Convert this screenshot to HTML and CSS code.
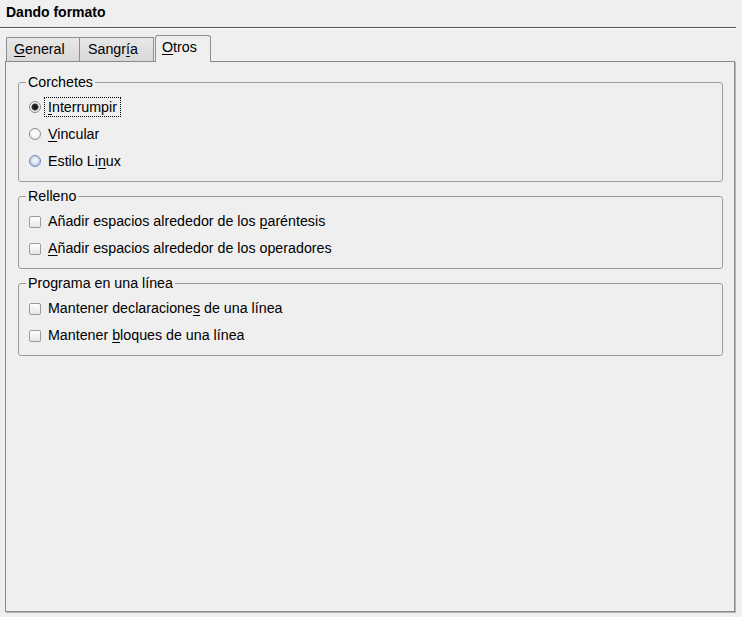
FILE: index.html
```html
<!DOCTYPE html>
<html lang="es">
<head>
<meta charset="utf-8">
<title>Dando formato</title>
<link rel="stylesheet" href="styles.css">
</head>
<body>
<div class="title">Dando formato</div>
<div class="separator"></div>
<div class="tabbar">
  <div class="tab tab-general"><u>G</u>eneral</div>
  <div class="tab tab-sangria">Sangr<u>í</u>a</div>
  <div class="tab tab-active"><u>O</u>tros</div>
</div>
<div class="pane">
  <fieldset class="group">
    <legend>Corchetes</legend>
    <div class="row"><span class="radio radio-checked"></span><span class="label focus"><u>I</u>nterrumpir</span></div>
    <div class="row"><span class="radio"></span><span class="label"><u>V</u>incular</span></div>
    <div class="row"><span class="radio radio-hover"></span><span class="label">Estilo Li<u>n</u>ux</span></div>
  </fieldset>
  <fieldset class="group">
    <legend>Relleno</legend>
    <div class="row"><span class="check"></span><span class="label">Añadir espacios alrededor de los <u>p</u>aréntesis</span></div>
    <div class="row"><span class="check"></span><span class="label"><u>A</u>ñadir espacios alrededor de los operadores</span></div>
  </fieldset>
  <fieldset class="group">
    <legend>Programa en una línea</legend>
    <div class="row"><span class="check"></span><span class="label">Mantener declaracione<u>s</u> de una línea</span></div>
    <div class="row"><span class="check"></span><span class="label">Mantener <u>b</u>loques de una línea</span></div>
  </fieldset>
</div>
</body>
</html>
```
FILE: styles.css
```css
* { box-sizing: border-box; }
html, body { margin: 0; padding: 0; }
body {
  background: #efefef;
  font-family: "Liberation Sans", Arial, sans-serif;
  font-size: 14.25px;
  color: #000;
  width: 742px;
  height: 617px;
  overflow: hidden;
}
u { text-decoration: underline; text-underline-offset: 2px; }

.title {
  height: 27px;
  padding: 4px 0 0 6px;
  line-height: 16px;
  font-weight: bold;
  font-size: 14px;
}
.separator {
  width: 736px;
  border-top: 1px solid #555;
  border-bottom: 1px solid #fff;
}

.tabbar {
  display: flex;
  align-items: flex-end;
  height: 26px;
  margin-top: 6px;
  padding-left: 6px;
}
.tab {
  height: 24px;
  line-height: 22px;
  border: 1px solid #8e8e8e;
  border-bottom: none;
  background: linear-gradient(#e8e8e8, #d8d8d8);
  white-space: nowrap;
}
.tab-general {
  width: 73px;
  padding-left: 7px;
  border-right: none;
  border-radius: 2px 0 0 0;
}
.tab-sangria {
  width: 75px;
  padding-left: 8px;
}
.tab-active {
  position: relative;
  z-index: 1;
  width: 56px;
  height: 27px;
  margin-left: 1px;
  margin-bottom: -1px;
  padding-left: 6px;
  line-height: 22px;
  background: #efefef;
  border-radius: 3px 3px 0 0;
}

.pane {
  width: 730px;
  height: 551px;
  margin-left: 5px;
  border: 1px solid #8a8a8a;
  box-shadow: 1px 1px 0 #b4b4b4;
  padding: 12px 11px 0 12px;
  display: flex;
  flex-direction: column;
  gap: 6px;
}

.group {
  margin: 0;
  padding: 7px 0 10px 10px;
  border: 1px solid #9c9c9c;
  border-radius: 3px;
  display: flex;
  flex-direction: column;
  gap: 7px;
  min-width: 0;
}
.group legend {
  margin-left: -3px;
  padding: 0 2px;
  line-height: 16px;
  height: 16px;
}

.row {
  display: flex;
  align-items: center;
  height: 20px;
}
.label {
  margin-left: 3px;
  height: 20px;
  line-height: 18px;
  padding: 0 3px;
  border: 1px dotted transparent;
  white-space: nowrap;
}
.label.focus { border-color: #000; }

.radio {
  width: 12px;
  height: 12px;
  border-radius: 50%;
  border: 1px solid #8c8c8c;
  background: radial-gradient(circle at 50% 40%, #ffffff 0, #f4f4f4 50%, #dedede 100%);
  flex: none;
}
.radio-checked {
  background: radial-gradient(circle, #1a1a1a 0, #1a1a1a 2.4px, #777 3.4px, #f2f2f2 3.9px, #dcdcdc 100%);
}
.radio-hover {
  border-color: #6f8fb5;
  background: radial-gradient(circle at 50% 45%, #f6f9fc 0, #e4ecf5 35%, #9fbad8 80%, #7d9cc2 100%);
}

.check {
  width: 12px;
  height: 12px;
  border: 1px solid #9a9a9a;
  border-radius: 2px;
  background: linear-gradient(#ffffff, #e6e6e6);
  flex: none;
  margin-top: 2px;
}
```
